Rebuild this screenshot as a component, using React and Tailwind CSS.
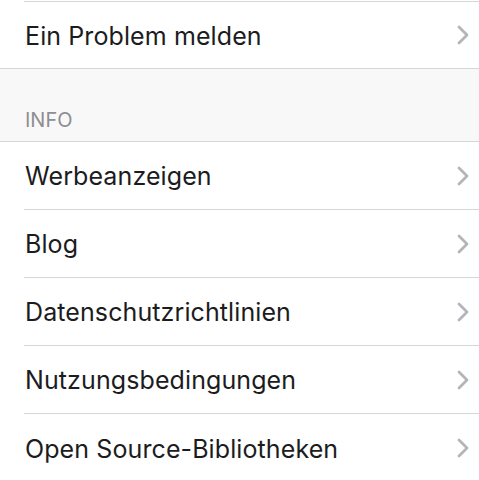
const Chevron = () => (
  <svg width="14" height="20" viewBox="0 0 14 20" fill="none" className="shrink-0">
    <path d="M3 2 L11 10 L3 18" stroke="#b4b4b9" strokeWidth="2.8" strokeLinecap="round" strokeLinejoin="round" />
  </svg>
);

const Row = ({ label, last }) => (
  <div className="pl-[24px] bg-white">
    <div className={`h-[68px] flex items-center justify-between pr-[9px] ${last ? "" : "border-b border-[#d6d6d9]"}`}>
      <span className="pl-[1px] pt-[3px] text-[25px] text-[#1c1c1e] tracking-[0.1px]">{label}</span>
      <Chevron />
    </div>
  </div>
);

export default function App() {
  const items = [
    "Werbeanzeigen",
    "Blog",
    "Datenschutzrichtlinien",
    "Nutzungsbedingungen",
    "Open Source-Bibliotheken",
  ];
  return (
    <div className="w-[479px] h-[480px] overflow-hidden bg-white" style={{ fontFamily: "Inter, 'Noto Sans', sans-serif" }}>
      <div className="h-[1px]" />
      <div className="pl-[24px]">
        <div className="border-t border-[#d6d6d9]" />
      </div>
      <div className="h-[67px] flex items-center justify-between pl-[25px] pr-[9px] border-b border-[#d6d6d9]">
        <span className="pt-[3px] text-[25px] text-[#1c1c1e] tracking-[0.1px]">Ein Problem melden</span>
        <Chevron />
      </div>
      <div className="h-[73px] bg-[#f8f8f8] border-b border-[#d6d6d9] flex items-end pl-[25px] pb-[6px]">
        <span className="text-[20px] text-[#8e8e93]">INFO</span>
      </div>
      {items.map((l, i) => (
        <Row key={l} label={l} last={i === items.length - 1} />
      ))}
    </div>
  );
}
